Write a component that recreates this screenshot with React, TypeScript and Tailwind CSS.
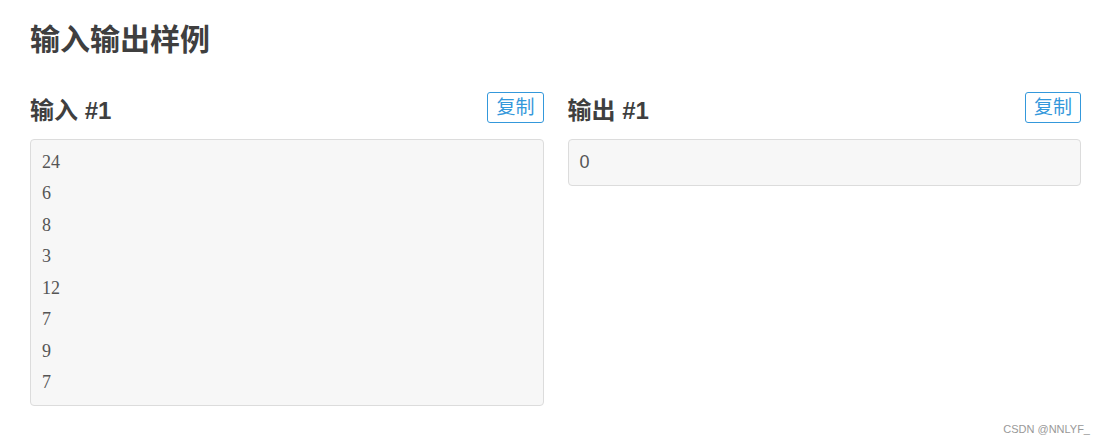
import React from "react";

const sans = '"Helvetica Neue", "Liberation Sans", "Noto Sans CJK SC", sans-serif';

function Block({ title, lines, serif }: { title: string; lines: string[]; serif: boolean }) {
  return (
    <div className="flex-1 min-w-0">
      <div className="flex items-end justify-between h-[47px]">
        <h3 className="text-[24px] font-bold text-[#3f3f3f] leading-none mb-[16px]" style={{ fontFamily: sans }}>
          {title}
        </h3>
        <button className="border border-[#3498db] rounded-[3px] text-[#3498db] text-[19px] leading-[29px] px-[8px] mb-[16px]" style={{ fontFamily: sans }}>
          复制
        </button>
      </div>
      <div className="bg-[#f7f7f7] border border-[#dcdcdc] rounded-[4px] px-[11px] py-[6.5px] text-[18px] text-[#555] leading-[31.5px]"
        style={{ fontFamily: serif ? '"Liberation Serif", "DejaVu Serif", serif' : '"Liberation Sans", sans-serif' }}>
        {lines.map((l, i) => (
          <div key={i}>{l}</div>
        ))}
      </div>
    </div>
  );
}

export default function App() {
  return (
    <div className="w-[1104px] h-[445px] bg-white relative overflow-hidden">
      <div className="px-[30px] pt-[20px] w-[1111px]">
        <h2 className="text-[30px] font-bold text-[#3f3f3f] leading-[40px]" style={{ fontFamily: sans }}>
          输入输出样例
        </h2>
        <div className="flex gap-[24px] mt-[32px] w-[1051px]">
          <Block title="输入 #1" lines={["24", "6", "8", "3", "12", "7", "9", "7"]} serif />
          <Block title="输出 #1" lines={["0"]} serif={false} />
        </div>
      </div>
      <div className="absolute right-[14px] bottom-[8px] text-[11px] text-[#999]" style={{ fontFamily: '"Liberation Sans", sans-serif' }}>
        CSDN @NNLYF_
      </div>
    </div>
  );
}
